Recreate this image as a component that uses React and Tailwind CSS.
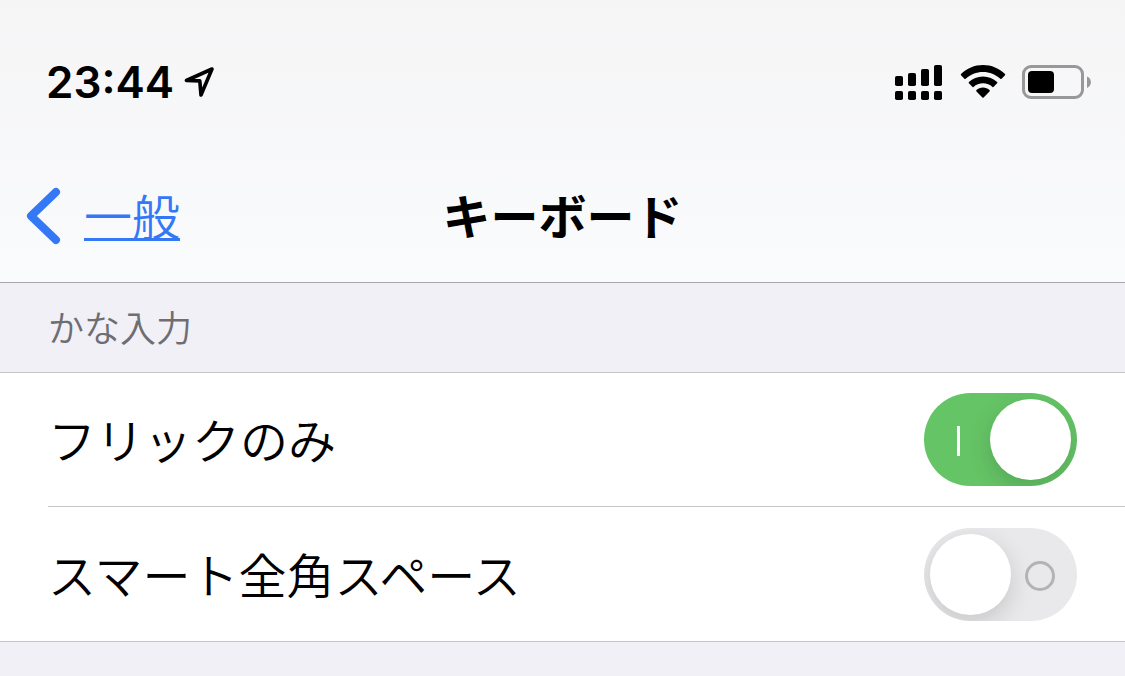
import { useState } from "react";

function LocationArrow() {
  return (
    <svg viewBox="0 0 32 32" className="size-8" fill="none" stroke="currentColor" strokeWidth="3.6" strokeLinejoin="round" strokeLinecap="round" aria-hidden="true">
      <path d="M4.4 14.5 L30 3 L19 29 L17.8 14.9 Z" />
    </svg>
  );
}

function SignalBars() {
  return (
    <svg viewBox="0 0 49 36" className="h-9 w-[49px]" fill="currentColor" aria-hidden="true">
      <rect x="0" y="12" width="8" height="10" rx="1.8" />
      <rect x="13" y="9" width="8" height="13" rx="1.8" />
      <rect x="26" y="5" width="8" height="17" rx="1.8" />
      <rect x="39" y="1" width="8" height="21" rx="1.8" />
      <rect x="0" y="27" width="8" height="9" rx="1.8" />
      <rect x="13" y="27" width="8" height="9" rx="1.8" />
      <rect x="26" y="27" width="8" height="9" rx="1.8" />
      <rect x="39" y="27" width="8" height="9" rx="1.8" />
    </svg>
  );
}

function Wifi() {
  return (
    <svg viewBox="0 0 46 34" className="h-[34px] w-[46px]" fill="currentColor" aria-hidden="true">
      <path d="M23 0 C31.5 0 39.3 3.4 45 8.9 Q45.6 9.5 45 10.2 L41.6 13.8 Q41 14.4 40.3 13.8 C35.6 9.4 29.6 7 23 7 C16.4 7 10.4 9.4 5.7 13.8 Q5 14.4 4.4 13.8 L1 10.2 Q.4 9.5 1 8.9 C6.7 3.4 14.5 0 23 0 Z" />
      <path d="M23 11.4 C28.5 11.4 33.4 13.5 37.1 16.9 Q37.8 17.5 37.1 18.2 L33.7 21.8 Q33.1 22.4 32.5 21.9 C29.9 19.6 26.7 18.3 23 18.3 C19.3 18.3 16.1 19.6 13.5 21.9 Q12.9 22.4 12.3 21.8 L8.9 18.2 Q8.2 17.5 8.9 16.9 C12.6 13.5 17.5 11.4 23 11.4 Z" />
      <path d="M23 22.6 C25.6 22.6 27.8 23.5 29.5 25 Q30.2 25.7 29.5 26.4 L23.6 32.5 Q23 33.1 22.4 32.5 L16.5 26.4 Q15.8 25.7 16.5 25 C18.2 23.5 20.4 22.6 23 22.6 Z" />
    </svg>
  );
}

function Battery() {
  return (
    <svg viewBox="0 0 70 34" className="h-[34px] w-[70px]" aria-hidden="true">
      <rect x="1.5" y="1.5" width="59" height="31" rx="7.5" fill="none" stroke="#98989a" strokeWidth="3" />
      <rect x="6" y="6" width="26" height="22" rx="4" fill="#000" />
      <path d="M65 11.6 C70.2 13.7 70.2 20.8 65 22.9 Z" fill="#98989a" />
    </svg>
  );
}

function SettingRow({ label, initial, last }) {
  const [on, setOn] = useState(initial);
  return (
    <li className="pl-12">
      <label className={`flex items-center justify-between pr-12 pb-5 ${last ? "pt-[21px]" : "border-b border-[#c6c6c8] pt-5"}`}>
        <span className="pb-1 text-5xl font-[350]">{label}</span>
        <span className="relative shrink-0">
          <input
            type="checkbox"
            role="switch"
            checked={on}
            onChange={(e) => setOn(e.target.checked)}
            className="absolute inset-0 size-full cursor-pointer opacity-0"
          />
          <span
            className={`flex h-[93px] w-[153px] items-center justify-between overflow-hidden rounded-full ${
              on ? "bg-[#65c466] pr-1.5 pl-[33px]" : "flex-row-reverse bg-[#e9e9eb] pr-[22px] pl-1.5"
            }`}
          >
            <span className={on ? "mt-[3px] h-[30px] w-[3px] bg-white" : "mt-[3px] size-[30px] rounded-full border-3 border-[#b3b3b3]"} />
            <span className="size-[81px] rounded-full bg-white shadow-[0_8px_24px_rgba(0,0,0,0.15)]" />
          </span>
        </span>
      </label>
    </li>
  );
}

export default function App() {
  return (
    <div lang="ja" className="min-h-screen bg-[#f1f0f6] font-['Noto_Sans_CJK_JP',sans-serif] text-black">
      <header className="border-b border-[#a9a9ad] bg-linear-to-b from-[#f5f5f6] to-[#fafbfd]">
        <div className="flex h-[150px] items-center justify-between pt-3.5 pr-[33px] pl-[46px]">
          <div className="flex items-center gap-2">
            <time className="font-['Inter',sans-serif] text-[44px] leading-none font-semibold">23:44</time>
            <LocationArrow />
          </div>
          <div className="flex items-center gap-4">
            <SignalBars />
            <Wifi />
            <Battery />
          </div>
        </div>
        <nav className="grid h-[132px] grid-cols-[1fr_auto_1fr] items-center pl-6">
          <a href="#general" className="flex items-center gap-5 text-[#3478f6]">
            <svg viewBox="0 0 40 60" className="h-[60px] w-10" fill="none" stroke="currentColor" strokeWidth="8" strokeLinecap="round" strokeLinejoin="round" aria-hidden="true">
              <path d="M32 6 L7 30 L32 54" />
            </svg>
            <span className="pb-1 text-5xl font-[350] underline decoration-3 underline-offset-3">一般</span>
          </a>
          <h1 className="pr-6 pb-1 text-5xl font-bold">キーボード</h1>
        </nav>
      </header>
      <main>
        <h2 className="flex h-[90px] items-center border-b border-[#c6c6c8] px-12 pb-1 text-4xl font-[350] text-[#6d6d72]">かな入力</h2>
        <ul className="border-b border-[#c6c6c8] bg-white">
          <SettingRow label="フリックのみ" initial={true} />
          <SettingRow label="スマート全角スペース" initial={false} last />
        </ul>
      </main>
    </div>
  );
}
